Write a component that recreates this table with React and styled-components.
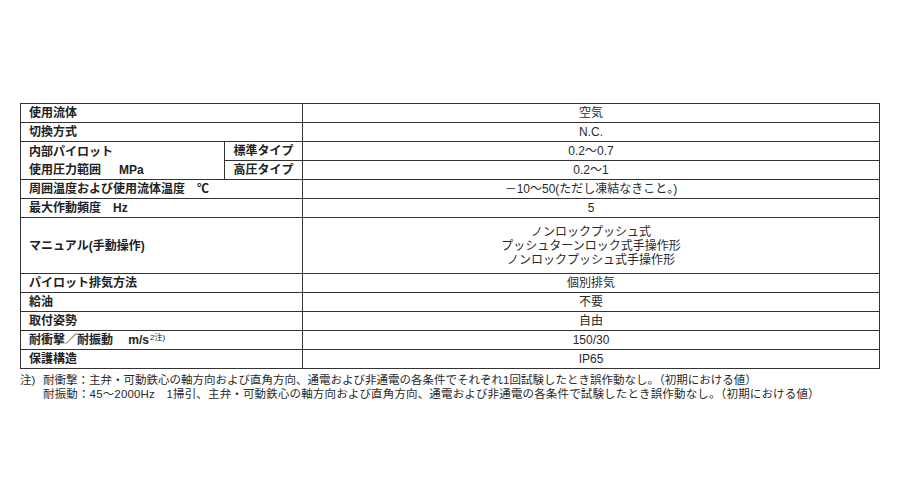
import React from 'react'
import styled, { createGlobalStyle } from 'styled-components'

const GlobalStyle = createGlobalStyle`
    html, body {
        margin: 0;
        padding: 0;
        background: #fff;
    }
    body {
        font-family: "Liberation Sans", "Noto Sans CJK JP", sans-serif;
        color: #1a1a1a;
    }
`

const rows = [
    { label: '使用流体', value: '空気' },
    { label: '切換方式', value: 'N.C.' },
    { pressure: true },
    { label: '周囲温度および使用流体温度\u3000℃', value: '－10〜50(ただし凍結なきこと。)' },
    { label: '最大作動頻度\u3000Hz', value: '5' },
    {
        label: 'マニュアル(手動操作)',
        lines: ['ノンロックプッシュ式', 'プッシュターンロック式手操作形', 'ノンロックプッシュ式手操作形'],
    },
    { label: 'パイロット排気方法', value: '個別排気' },
    { label: '給油', value: '不要' },
    { label: '取付姿勢', value: '自由' },
    { label: '耐衝撃／耐振動\u3000 m/s', sup: '2注)', value: '150/30' },
    { label: '保護構造', value: 'IP65' },
]

function App() {
    return (
        <Wrap>
            <GlobalStyle />
            <Spec>
                <colgroup>
                    <col style={{ width: 204 }} />
                    <col style={{ width: 78 }} />
                    <col />
                </colgroup>
                <tbody>
                    {rows.map((row, idx) => {
                        if (row.pressure) {
                            return (
                                <React.Fragment key={idx}>
                                    <Row>
                                        <Label rowSpan={2}>
                                            内部パイロット<br />
                                            使用圧力範囲<Gap />MPa
                                        </Label>
                                        <SubLabel>標準タイプ</SubLabel>
                                        <Value>0.2〜0.7</Value>
                                    </Row>
                                    <Row>
                                        <SubLabel>高圧タイプ</SubLabel>
                                        <Value>0.2〜1</Value>
                                    </Row>
                                </React.Fragment>
                            )
                        }
                        return (
                            <Row key={idx} $tall={!!row.lines}>
                                <Label colSpan={2}>
                                    {row.label}
                                    {row.sup && <Sup>{row.sup}</Sup>}
                                </Label>
                                <Value>
                                    {row.lines
                                        ? row.lines.map((l, i) => <Line key={i}>{l}</Line>)
                                        : row.value}
                                </Value>
                            </Row>
                        )
                    })}
                </tbody>
            </Spec>
            <Notes>
                <Note>
                    <span className="mark">注)</span>
                    耐衝撃：主弁・可動鉄心の軸方向および直角方向、通電および非通電の各条件でそれぞれ1回試験したとき誤作動なし。（初期における値）
                </Note>
                <Note $spread>
                    <span className="mark" />
                    耐振動：45〜2000Hz　1掃引、主弁・可動鉄心の軸方向および直角方向、通電および非通電の各条件で試験したとき誤作動なし。（初期における値）
                </Note>
            </Notes>
        </Wrap>
    )
}

export default App

const Wrap = styled.div`
    width: 901px;
    height: 500px;
    box-sizing: border-box;
    padding: 103px 21px 0 20px;
`

const Spec = styled.table`
    width: 860px;
    border-collapse: collapse;
    table-layout: fixed;
    border: 1.5px solid #111;
    font-size: 12px;
`

const Row = styled.tr`
    height: ${props => props.$tall ? '56px' : '19px'};
`

const Label = styled.td`
    border: 1px solid #333;
    padding: 0 0 0 8px;
    font-weight: 700;
    color: #222;
    line-height: 18px;
    white-space: nowrap;
    vertical-align: middle;
`

const SubLabel = styled.td`
    border: 1px solid #333;
    padding: 0;
    text-align: center;
    font-weight: 700;
    color: #222;
    line-height: 17px;
    white-space: nowrap;
`

const Value = styled.td`
    border: 1px solid #333;
    border-left: 1.5px solid #111;
    padding: 0;
    text-align: center;
    color: #2a2a2a;
    line-height: 15px;
    white-space: nowrap;
`

const Line = styled.div`
    height: 14px;
    line-height: 14px;
`

const Gap = styled.span`
    display: inline-block;
    width: 18px;
`

const Sup = styled.sup`
    font-size: 8px;
    font-weight: 400;
    vertical-align: 4px;
    line-height: 0;
    margin-left: 1px;
`

const Notes = styled.div`
    margin-top: 4px;
    font-size: 11.5px;
    line-height: 14px;
    color: #2a2a2a;
`

const Note = styled.div`
    display: flex;
    white-space: nowrap;
    letter-spacing: ${props => props.$spread ? '0.15px' : '0'};

    .mark {
        display: inline-block;
        width: 23px;
    }
`
